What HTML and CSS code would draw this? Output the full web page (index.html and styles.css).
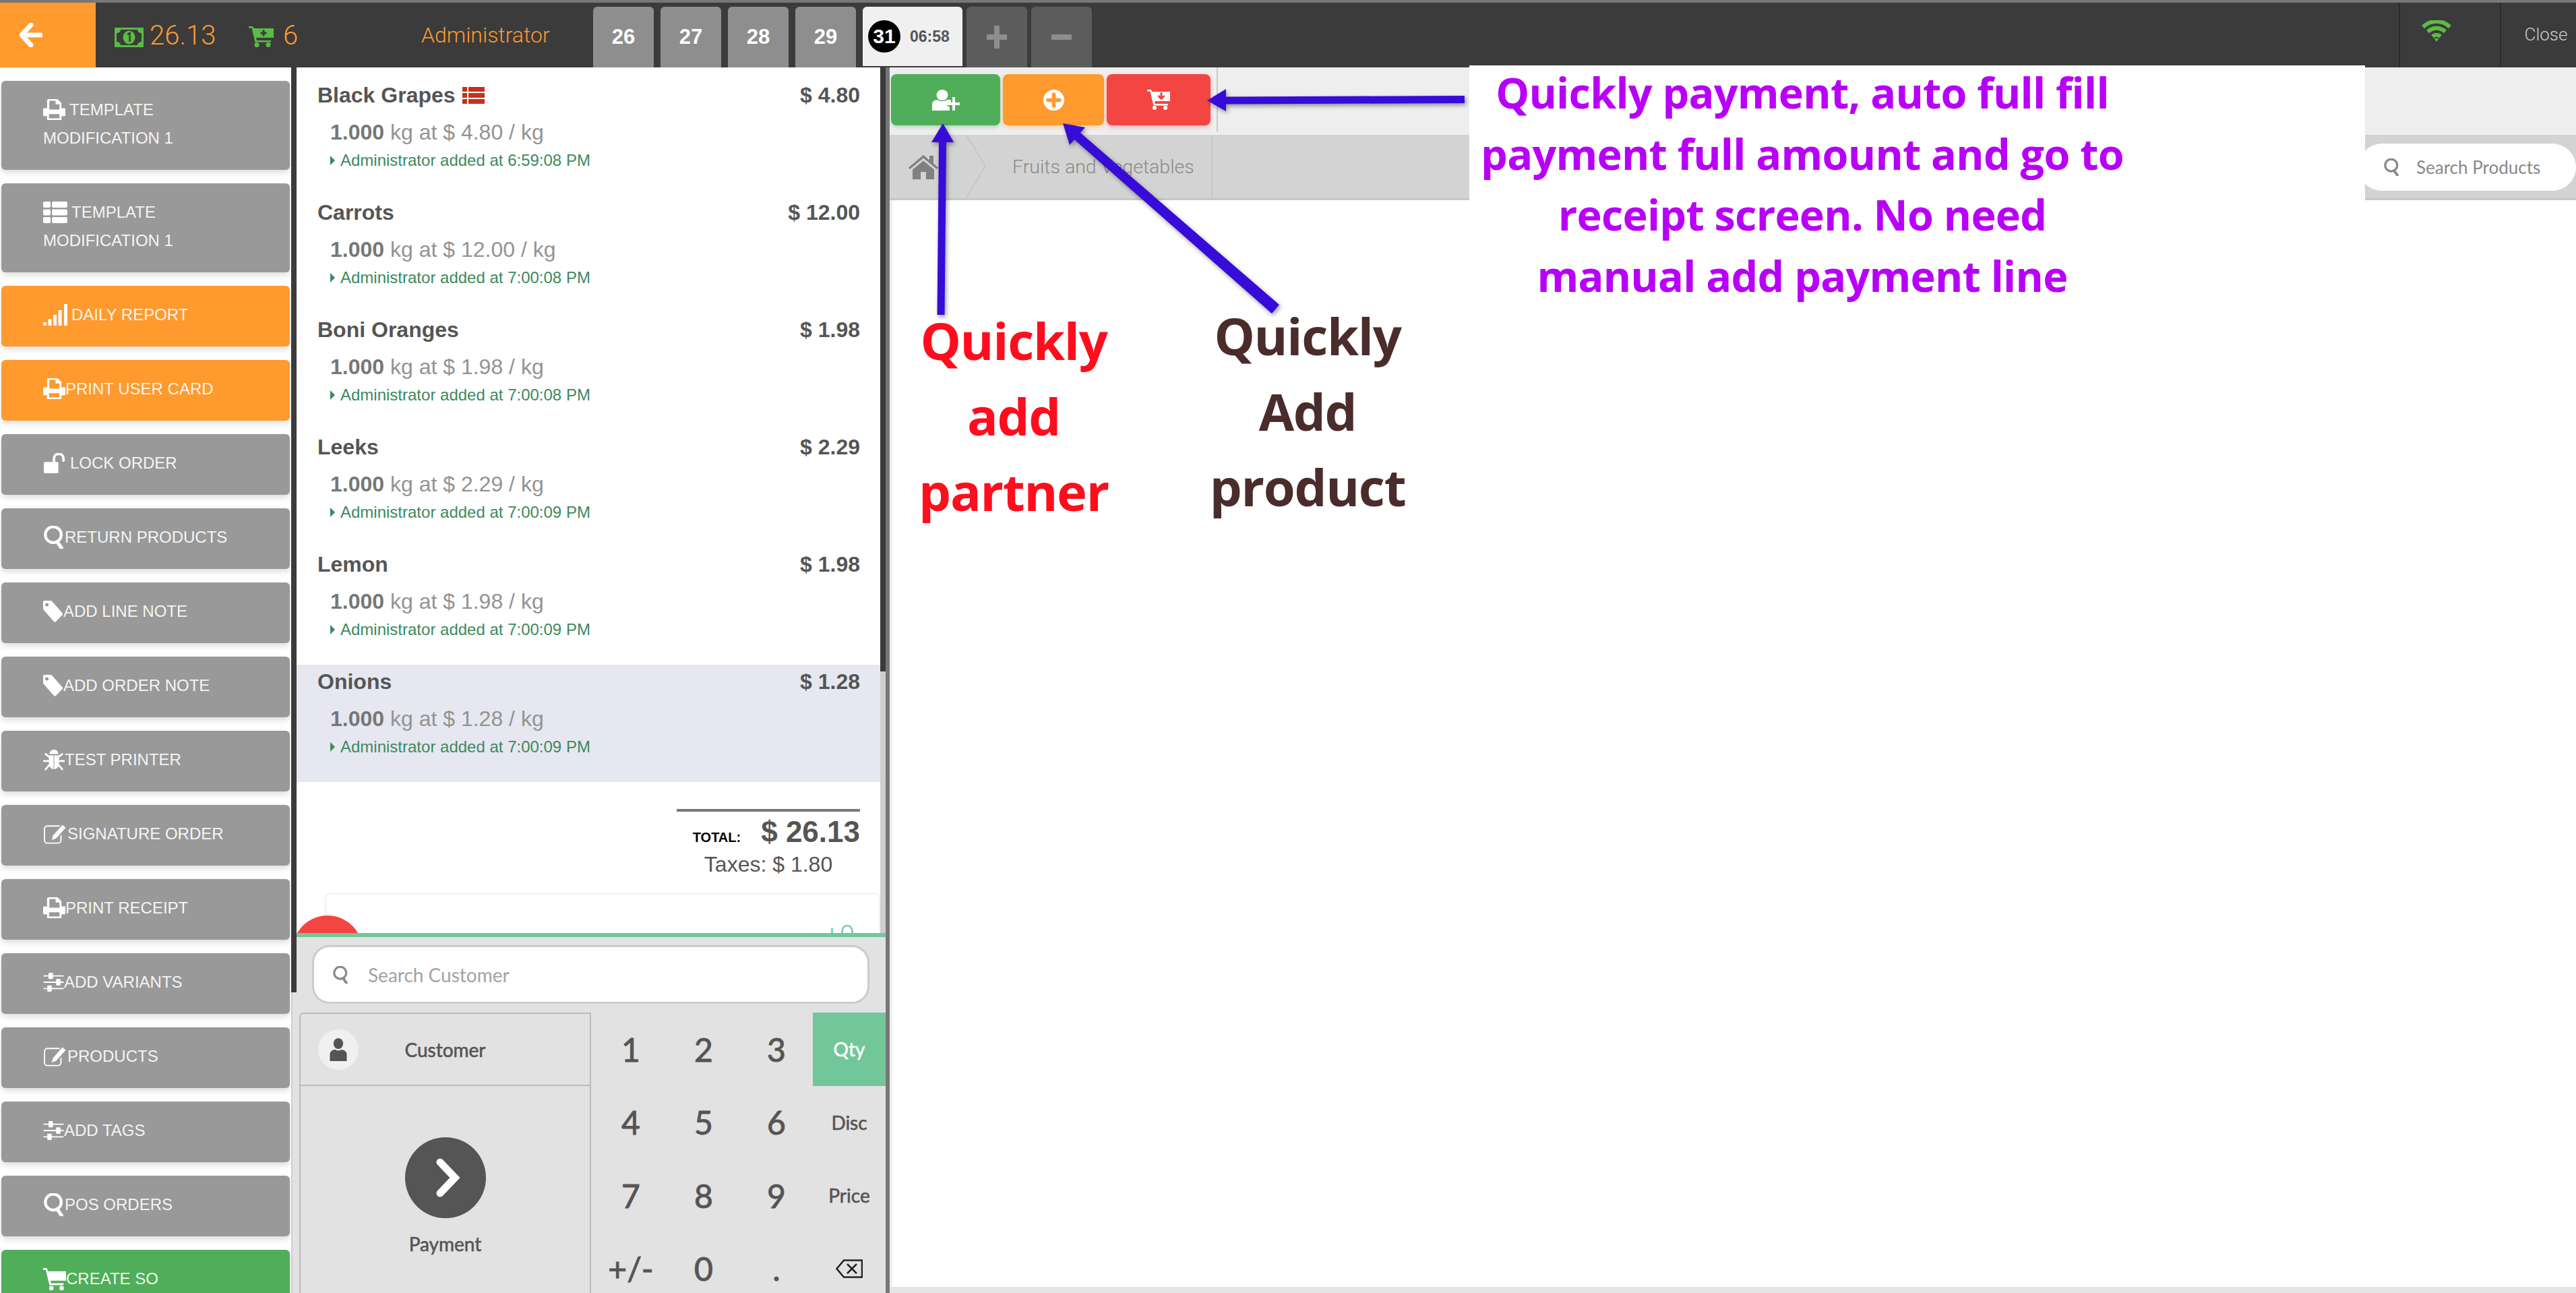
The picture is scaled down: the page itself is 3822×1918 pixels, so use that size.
FILE: index.html
```html
<!DOCTYPE html>
<html lang="en">
<head>
    <meta charset="UTF-8">
    <title>Point of Sale</title>
    <link rel="stylesheet" href="styles.css">
</head>
<body>
<svg class="defs" width="0" height="0">
    <symbol id="i-print" viewBox="0 0 34 34"><path fill-rule="evenodd" d="M8 1h14l6 6v8h5c.6 0 1 .4 1 1v10c0 .6-.4 1-1 1h-5v6H6v-6H1c-.6 0-1-.4-1-1V16c0-.6.4-1 1-1h5V3c0-1 1-2 2-2zm1.500 2.500V17h15.500V9h-6V3.500zM9 24v6.500h16V24z"/></symbol>
    <symbol id="i-list" viewBox="0 0 36 32"><rect x="0" y="0" width="11" height="9" rx="2"/><rect x="13" y="0" width="23" height="9" rx="2"/><rect x="0" y="11.500" width="11" height="9" rx="2"/><rect x="13" y="11.500" width="23" height="9" rx="2"/><rect x="0" y="23" width="11" height="9" rx="2"/><rect x="13" y="23" width="23" height="9" rx="2"/></symbol>
    <symbol id="i-rows" viewBox="0 0 33 25"><rect x="0" y="0" width="7" height="7"/><rect x="9" y="0" width="24" height="7"/><rect x="0" y="9" width="7" height="7"/><rect x="9" y="9" width="24" height="7"/><rect x="0" y="18" width="7" height="7"/><rect x="9" y="18" width="24" height="7"/></symbol>
    <symbol id="i-signal" viewBox="0 0 36 32"><rect x="0" y="27" width="5" height="5"/><rect x="7.500" y="22" width="5" height="10"/><rect x="15" y="16" width="5" height="16"/><rect x="22.500" y="9" width="5" height="23"/><rect x="31" y="0" width="5" height="32"/></symbol>
    <symbol id="i-unlock" viewBox="0 0 34 32"><path d="M2 14h19c1.100 0 2 .9 2 2v14c0 1.100-.9 2-2 2H2c-1.100 0-2-.9-2-2V16c0-1.100.9-2 2-2z"/><path d="M16 14V9c0-4.500 3-7.500 7.500-7.500S31 4.500 31 9v3" fill="none" stroke="#fff" stroke-width="4" stroke-linecap="round"/></symbol>
    <symbol id="i-search" viewBox="0 0 32 36"><circle cx="15" cy="14" r="12.500" fill="none" stroke="currentColor" stroke-width="4.500"/><path d="M21 25l7 10" fill="none" stroke="currentColor" stroke-width="5.500" stroke-linecap="round"/></symbol>
    <symbol id="i-tag" viewBox="0 0 30 32"><path fill-rule="evenodd" d="M2 0h9c1 0 1.700.4 2.400 1.200l15 17c.8.9.8 2.100 0 3L19 31c-.8.9-2.200.9-3 0L1.200 14.200C.5 13.400 0 12.300 0 11.200V2c0-1.100.9-2 2-2zm3.500 3.500a2.500 2.500 0 1 0 0 5 2.500 2.500 0 0 0 0-5z"/></symbol>
    <symbol id="i-bug" viewBox="0 0 32 34"><path d="M9 8c0-4 3-7 7-7s7 3 7 7z"/><path d="M8 10h7.500v22C11 31 8 28 8 23zM16.500 10H24v13c0 5-3 8-7.500 9z"/><path d="M8 12L3 8M24 12l5-4M7 19H0M25 19h7M8 26l-5 6M24 26l5 6" fill="none" stroke="#fff" stroke-width="3" stroke-linecap="round"/></symbol>
    <symbol id="i-edit" viewBox="0 0 36 32"><path d="M27 18v8c0 2.500-2 4.500-4.500 4.500h-17C3 30.500 1 28.500 1 26V8c0-2.500 2-4.500 4.500-4.500H25" fill="none" stroke="#fff" stroke-width="2"/><path d="M29.500 1.500l5 4.500-15 17-7 2.500 2-7z"/></symbol>
    <symbol id="i-sliders" viewBox="0 0 32 30"><path d="M0 4h32v2H0zM0 14h32v2H0zM0 24h32v2H0z"/><rect x="8" y="0" width="7" height="10" rx="1"/><rect x="20" y="10" width="7" height="10" rx="1"/><rect x="6" y="20" width="7" height="10" rx="1"/></symbol>
    <symbol id="i-cart" viewBox="0 0 36 36"><path d="M0 1h6l1.500 5H36v15H11.500l1 4H32v3H10L4 4H0z"/><circle cx="13" cy="32.500" r="3.500"/><circle cx="29" cy="32.500" r="3.500"/></symbol>
    <symbol id="i-home" viewBox="0 0 44 36"><path d="M22 0L31 7.500V1h6v11.500L44 18.500l-2 2.500L22 4.500 2 21l-2-2.500z"/><path d="M22 8.500L38 21.500V36H26V25h-8v11H6V21.500z"/></symbol>
</svg>

<div class="screen">
    <div class="topline"></div>
    <header class="header">
        <a class="back-btn">
            <svg width="34" height="36" viewBox="0 0 34 36"><path d="M17 3L3 18l14 15M4 18h27" fill="none" stroke="#fff" stroke-width="7" stroke-linecap="round" stroke-linejoin="round"/></svg>
        </a>
        <svg class="money" width="43" height="29" viewBox="0 0 43 29"><path fill-rule="evenodd" fill="#5bbb45" d="M1 0h41c.6 0 1 .4 1 1v27c0 .6-.4 1-1 1H1c-.6 0-1-.4-1-1V1c0-.6.4-1 1-1zm8 3c0 3-3 5-6 5v13c3 0 6 2 6 5h25c0-3 3-5 6-5V8c-3 0-6-2-6-5z"/><ellipse cx="21.500" cy="14.500" rx="9" ry="10" fill="#5bbb45"/><path d="M19 10l3.500-2v13" fill="none" stroke="#3b3b3b" stroke-width="2.500"/></svg>
        <span class="hdr-num total-num">26.13</span>
        <svg class="hdr-cart" width="37" height="32" viewBox="0 0 37 32"><path fill="#5bbb45" d="M0 1h6l1.500 3H37v14H11l.8 4H33v2.500H9.500L4.500 3.500H0z"/><circle cx="12" cy="28.500" r="3.500" fill="#5bbb45"/><circle cx="29" cy="28.500" r="3.500" fill="#5bbb45"/><path d="M22 6.500v9M17.500 11h9" stroke="#3b3b3b" stroke-width="3"/></svg>
        <span class="hdr-num cart-num">6</span>
        <span class="cashier">Administrator</span>
        <div class="tabs">
            <div class="tab">26</div>
            <div class="tab">27</div>
            <div class="tab">28</div>
            <div class="tab">29</div>
            <div class="tab tab-active"><span class="tab-circle">31</span><span class="tab-time">06:58</span></div>
            <div class="tab tab-dark">
                <svg width="30" height="34" viewBox="0 0 30 34"><path d="M15 2v30M1 17h28" stroke="#8e8e8e" stroke-width="8" stroke-linecap="round"/></svg>
            </div>
            <div class="tab tab-dark">
                <svg width="30" height="10" viewBox="0 0 30 10"><path d="M2 5h26" stroke="#8e8e8e" stroke-width="8" stroke-linecap="round"/></svg>
            </div>
        </div>
        <div class="hdr-right">
            <div class="hdr-cell wifi-cell">
                <svg width="44" height="32" viewBox="0 0 44 32"><g fill="none" stroke="#5bbb45" stroke-width="6"><path d="M2 10c12-11 28-11 40 0"/><path d="M9 17c8-7 18-7 26 0"/><path d="M16 24c4-3 8-3 12 0"/></g><path d="M18.500 27h7L22 32z" fill="#5bbb45"/></svg>
            </div>
            <div class="hdr-cell close-cell">Close</div>
        </div>
    </header>

    <div class="main">
        <aside class="sidebar">
            <div class="side-btns">
                <a class="side-btn"><svg class="ico gap-print" width="33" height="33"><use href="#i-print"/></svg>TEMPLATE<br>MODIFICATION 1</a>
                <a class="side-btn"><svg class="ico gap-list" width="36" height="32"><use href="#i-list"/></svg>TEMPLATE<br>MODIFICATION 1</a>
                <a class="side-btn btn-orange"><svg class="ico gap-list" width="36" height="32"><use href="#i-signal"/></svg>DAILY REPORT</a>
                <a class="side-btn btn-orange"><svg class="ico" width="33" height="33"><use href="#i-print"/></svg>PRINT USER CARD</a>
                <a class="side-btn"><svg class="ico gap-print" width="34" height="30"><use href="#i-unlock"/></svg>LOCK ORDER</a>
                <a class="side-btn"><svg class="ico" width="32" height="34"><use href="#i-search"/></svg>RETURN PRODUCTS</a>
                <a class="side-btn"><svg class="ico" width="30" height="32"><use href="#i-tag"/></svg>ADD LINE NOTE</a>
                <a class="side-btn"><svg class="ico" width="30" height="32"><use href="#i-tag"/></svg>ADD ORDER NOTE</a>
                <a class="side-btn"><svg class="ico" width="32" height="32"><use href="#i-bug"/></svg>TEST PRINTER</a>
                <a class="side-btn"><svg class="ico" width="36" height="30"><use href="#i-edit"/></svg>SIGNATURE ORDER</a>
                <a class="side-btn"><svg class="ico" width="33" height="33"><use href="#i-print"/></svg>PRINT RECEIPT</a>
                <a class="side-btn"><svg class="ico" width="31" height="28"><use href="#i-sliders"/></svg>ADD VARIANTS</a>
                <a class="side-btn"><svg class="ico" width="36" height="30"><use href="#i-edit"/></svg>PRODUCTS</a>
                <a class="side-btn"><svg class="ico" width="31" height="28"><use href="#i-sliders"/></svg>ADD TAGS</a>
                <a class="side-btn"><svg class="ico" width="32" height="34"><use href="#i-search"/></svg>POS ORDERS</a>
                <a class="side-btn btn-green"><svg class="ico" width="34" height="34"><use href="#i-cart"/></svg>CREATE SO</a>
            </div>
            <div class="side-scroll"><div class="side-thumb"></div></div>
        </aside>

        <section class="order-col">
            <div class="order-top">
                <div class="order-list">
                    <div class="line">
                        <div class="line-head"><span>Black Grapes <svg class="line-flag" width="33" height="25"><use href="#i-rows"/></svg></span><span>$ 4.80</span></div>
                        <div class="line-info"><b>1.000</b> kg at $ 4.80 / kg</div>
                        <div class="line-note">Administrator added at 6:59:08 PM</div>
                    </div>
                    <div class="line">
                        <div class="line-head"><span>Carrots</span><span>$ 12.00</span></div>
                        <div class="line-info"><b>1.000</b> kg at $ 12.00 / kg</div>
                        <div class="line-note">Administrator added at 7:00:08 PM</div>
                    </div>
                    <div class="line">
                        <div class="line-head"><span>Boni Oranges</span><span>$ 1.98</span></div>
                        <div class="line-info"><b>1.000</b> kg at $ 1.98 / kg</div>
                        <div class="line-note">Administrator added at 7:00:08 PM</div>
                    </div>
                    <div class="line">
                        <div class="line-head"><span>Leeks</span><span>$ 2.29</span></div>
                        <div class="line-info"><b>1.000</b> kg at $ 2.29 / kg</div>
                        <div class="line-note">Administrator added at 7:00:09 PM</div>
                    </div>
                    <div class="line">
                        <div class="line-head"><span>Lemon</span><span>$ 1.98</span></div>
                        <div class="line-info"><b>1.000</b> kg at $ 1.98 / kg</div>
                        <div class="line-note">Administrator added at 7:00:09 PM</div>
                    </div>
                    <div class="line line-selected">
                        <div class="line-head"><span>Onions</span><span>$ 1.28</span></div>
                        <div class="line-info"><b>1.000</b> kg at $ 1.28 / kg</div>
                        <div class="line-note">Administrator added at 7:00:09 PM</div>
                    </div>
                    <div class="summary">
                        <div class="summary-total"><span class="summary-label">TOTAL:</span>$ 26.13</div>
                        <div class="summary-tax">Taxes: $ 1.80</div>
                    </div>
                    <div class="loyalty"><span class="loyalty-points">+0</span></div>
                    <div class="red-dot"></div>
                </div>
                <div class="order-scroll"><div class="order-thumb"></div></div>
            </div>
            <div class="pad">
                <div class="cust-search">
                    <svg class="cust-search-ico" width="23" height="26"><use href="#i-search"/></svg>
                    <span>Search Customer</span>
                </div>
                <div class="pad-body">
                    <div class="actions">
                        <div class="act-customer">
                            <span class="avatar">
                                <svg width="28" height="38" viewBox="0 0 28 38"><ellipse cx="14" cy="9" rx="8" ry="9" fill="#555"/><path d="M0 38V27c0-6 6-8 9-8 2 2 8 2 10 0 3 0 9 2 9 8v11z" fill="#555"/></svg>
                            </span>
                            <span class="act-customer-name">Customer</span>
                        </div>
                        <div class="act-pay">
                            <span class="pay-circle">
                                <svg width="40" height="62" viewBox="0 0 40 62"><path d="M9 8l22 23L9 54" fill="none" stroke="#fff" stroke-width="11" stroke-linecap="round"/></svg>
                            </span>
                            <span class="pay-label">Payment</span>
                        </div>
                    </div>
                    <div class="numpad">
                        <div class="key">1</div><div class="key">2</div><div class="key">3</div><div class="key key-mode key-on">Qty</div>
                        <div class="key">4</div><div class="key">5</div><div class="key">6</div><div class="key key-mode">Disc</div>
                        <div class="key">7</div><div class="key">8</div><div class="key">9</div><div class="key key-mode">Price</div>
                        <div class="key">+/-</div><div class="key">0</div><div class="key">.</div>
                        <div class="key">
                            <svg width="40" height="28" viewBox="0 0 40 28"><path d="M39 1.500H12L1.500 14 12 26.500h27z" fill="none" stroke="#222" stroke-width="2.500"/><path d="M17 7l14 14M31 7L17 21" stroke="#222" stroke-width="2.500"/></svg>
                        </div>
                    </div>
                </div>
            </div>
        </section>

        <section class="products">
            <div class="toolbar">
                <a class="quick quick-green">
                    <svg width="41" height="31" viewBox="0 0 41 31"><ellipse cx="15" cy="8" rx="8.500" ry="8" fill="#fff"/><path d="M0 31V22c0-4 3-7 8-7 4 3 10 3 14 0h6v4h-5v6h3v6z" fill="#fff"/><path d="M32 11v20M23 21h18" stroke="#fff" stroke-width="4"/></svg>
                </a>
                <a class="quick quick-orange">
                    <svg width="31" height="31" viewBox="0 0 31 31"><circle cx="15.500" cy="15.500" r="15.500" fill="#fff"/><path d="M15.500 7v17M7 15.500h17" stroke="#ff9a2e" stroke-width="5.500" stroke-linecap="round"/></svg>
                </a>
                <a class="quick quick-red">
                    <svg width="34" height="30" viewBox="0 0 34 30"><path fill="#fff" d="M0 0h6l1.500 3H34v14H11l.8 4H31v2.500H9.500L4.500 2.500H0z"/><circle cx="11" cy="27" r="3" fill="#fff"/><circle cx="27" cy="27" r="3" fill="#fff"/><path d="M21 4v8M16.500 9l4.500 4.500L25.500 9" fill="none" stroke="#f34541" stroke-width="3"/></svg>
                </a>
                <span class="toolbar-line"></span>
            </div>
            <div class="crumbs">
                <svg class="crumb-home" width="44" height="36"><use href="#i-home"/></svg>
                <svg class="crumb-sep" width="30" height="97" viewBox="0 0 30 97"><path d="M0 0l29 47L0 96" fill="none" stroke="#c4c4c4" stroke-width="1.500"/></svg>
                <span class="crumb-text">Fruits and Vegetables</span>
                <div class="prod-search">
                    <svg class="prod-search-ico" width="23" height="26"><use href="#i-search"/></svg>
                    <span>Search Products</span>
                </div>
            </div>
            <div class="prod-area"></div>
            <div class="prod-foot"></div>
        </section>
    </div>

    <!-- notes drawn over the screenshot -->
    <div class="note-box"></div>
    <svg class="arrows" width="3822" height="1918" viewBox="0 0 3822 1918">
        <path d="M2173 142L1819 143.500V132L1791 149l28 16v-10.500L2173 153z"/>
        <path d="M1390.500 467L1393 211H1382L1399 183l16 28H1404L1401.500 467z"/>
        <path d="M1898 452L1603 197 1610 189 1577 183 1587 215 1594 207 1887 465z"/>
    </svg>
    <div class="note note-pay">Quickly payment, auto full fill<br>payment full amount and go to<br>receipt screen. No need<br>manual add payment line</div>
    <div class="note note-partner">Quickly<br>add<br>partner</div>
    <div class="note note-product">Quickly<br>Add<br>product</div>
</div>
</body>
</html>
```

FILE: styles.css
```css
* {
    box-sizing: border-box;
}
html, body {
    margin: 0;
    padding: 0;
    background: #fff;
}
.defs {
    position: absolute;
}
.screen {
    position: relative;
    width: 3822px;
    height: 1918px;
    overflow: hidden;
    display: flex;
    flex-direction: column;
    font-family: "Liberation Sans", Arial, sans-serif;
}
.topline {
    height: 4px;
    background: #777;
    flex: none;
}

/* header */
.header {
    height: 96px;
    flex: none;
    background: #3b3b3b;
    display: flex;
    align-items: center;
    font-family: Roboto, "Liberation Sans", sans-serif;
    font-weight: 300;
    color: #ff9a2e;
}
.back-btn {
    width: 142px;
    height: 96px;
    background: #ff9a2e;
    display: flex;
    align-items: center;
    padding-left: 29px;
}
.money {
    margin-left: 28px;
    margin-top: 6px;
}
.hdr-num {
    font-size: 40px;
}
.total-num {
    margin-left: 9px;
    width: 100px;
}
.hdr-cart {
    margin-left: 47px;
    margin-top: 4px;
}
.cart-num {
    margin-left: 14px;
    width: 24px;
}
.cashier {
    margin-left: 181px;
    font-size: 32px;
    width: 255px;
}
.tabs {
    display: flex;
    align-self: flex-start;
    margin-top: 6px;
    gap: 10px;
}
.tab {
    width: 90px;
    height: 90px;
    background: #8e8e8e;
    border-radius: 6px 6px 0 0;
    color: #fff;
    font-family: "Liberation Sans", sans-serif;
    font-weight: 700;
    font-size: 31px;
    display: flex;
    align-items: center;
    justify-content: center;
}
.tab-active {
    width: 148px;
    height: 88px;
    background: #f0f0f0;
    justify-content: flex-start;
    padding-left: 8px;
}
.tab-circle {
    width: 48px;
    height: 48px;
    border-radius: 50%;
    background: #000;
    color: #fff;
    font-size: 30px;
    display: flex;
    align-items: center;
    justify-content: center;
}
.tab-time {
    margin-left: 14px;
    font-size: 23px;
    color: #555;
}
.tab-dark {
    background: #5c5c5c;
    margin-left: -4px;
}
.hdr-right {
    margin-left: auto;
    display: flex;
    height: 96px;
}
.hdr-cell {
    display: flex;
    align-items: center;
    justify-content: center;
    border-left: 2px solid #2b2b2b;
}
.wifi-cell {
    width: 150px;
    padding-right: 40px;
    padding-bottom: 12px;
}
.close-cell {
    width: 113px;
    color: #ccc;
    font-size: 26px;
    padding-left: 22px;
    padding-bottom: 2px;
}

/* main */
.main {
    flex: 1;
    display: flex;
    min-height: 0;
}

/* left buttons */
.sidebar {
    width: 440px;
    flex: none;
    display: flex;
    overflow: hidden;
}
.side-btns {
    width: 432px;
    flex: none;
    padding: 20px 2px 0;
    display: flex;
    flex-direction: column;
    gap: 20px;
}
.side-btn {
    display: block;
    flex: none;
    width: 428px;
    padding: 22px 10px 26px 62px;
    background: #999;
    border-radius: 6px;
    box-shadow: 0 4px 10px rgba(0, 0, 0, 0.14);
    color: rgba(255, 255, 255, 0.92);
    fill: #fff;
    font-family: "Liberation Sans", sans-serif;
    font-size: 24px;
    line-height: 42px;
    white-space: nowrap;
}
.btn-orange {
    background: #ff9a2e;
}
.btn-green {
    background: #50ae5a;
}
.ico {
    vertical-align: middle;
    margin-top: -4px;
    color: #fff;
}
.gap-print {
    margin-right: 6px;
}
.gap-list {
    margin-right: 6px;
}
.side-scroll {
    width: 8px;
    background: #e2e2e2;
    border-left: 2px solid #cfcfcf;
}
.side-thumb {
    width: 8px;
    height: 1372px;
    margin-left: -2px;
    background: #3b3b3b;
}

/* order */
.order-col {
    width: 880px;
    flex: none;
    display: flex;
    flex-direction: column;
    border-right: 6px solid #777;
}
.order-top {
    height: 1290px;
    flex: none;
    display: flex;
    border-bottom: 6px solid #72c79a;
}
.order-list {
    position: relative;
    width: 866px;
    flex: none;
    overflow: hidden;
    padding-top: 16px;
    background: #fff;
}
.order-scroll {
    width: 8px;
    flex: none;
    background: #cfcfcf;
}
.order-thumb {
    height: 896px;
    background: #3b3b3b;
}
.line {
    height: 174px;
    padding: 0 30px 0 31px;
}
.line-selected {
    background: #e6e7f0;
}
.line-head {
    display: flex;
    justify-content: space-between;
    height: 50px;
    line-height: 50px;
    font-size: 32px;
    font-weight: 700;
    color: #555;
}
.line-flag {
    fill: #c9301a;
    vertical-align: -2px;
    margin-left: 2px;
}
.line-info {
    margin: 10px 0 0 19px;
    line-height: 40px;
    font-size: 32px;
    color: #939393;
}
.line-info b {
    color: #777;
}
.line-note {
    position: relative;
    margin: 7px 0 0 34px;
    line-height: 30px;
    font-size: 24px;
    color: #3b8a5e;
}
.line-note::before {
    content: "";
    position: absolute;
    left: -15px;
    top: 8px;
    border-left: 7px solid #3b8a5e;
    border-top: 7px solid transparent;
    border-bottom: 7px solid transparent;
}
.summary {
    width: 272px;
    margin: 40px 30px 0 auto;
    border-top: 4px solid #777;
    text-align: center;
}
.summary-total {
    line-height: 60px;
    font-size: 44px;
    font-weight: 700;
    color: #555;
    text-align: right;
}
.summary-label {
    margin-right: 30px;
    font-size: 20px;
    color: #000;
}
.summary-tax {
    margin-top: -10px;
    line-height: 40px;
    font-size: 32px;
    color: #555;
}
.loyalty {
    margin: 23px 0 0 42px;
    height: 120px;
    border: 2px solid #f3f3f3;
    border-radius: 8px 8px 0 0;
    box-shadow: 0 0 6px rgba(0, 0, 0, 0.03);
    position: relative;
    text-align: right;
    padding: 38px 36px 0 0;
}
.loyalty-points {
    font-size: 40px;
    line-height: 46px;
    color: #72c79a;
    font-family: Roboto, sans-serif;
    font-weight: 300;
}
.red-dot {
    position: absolute;
    left: -6px;
    top: 1258px;
    width: 104px;
    height: 104px;
    border-radius: 50%;
    background: #f34541;
}

/* numpad */
.pad {
    flex: 1;
    background: #e2e2e2;
    padding-top: 12px;
    font-family: Lato, sans-serif;
    min-height: 0;
    overflow: hidden;
}
.cust-search {
    width: 827px;
    height: 87px;
    margin-left: 23px;
    background: #fff;
    border: 3px solid #ccc;
    border-radius: 26px;
    display: flex;
    align-items: center;
    color: #a3a3a3;
    font-size: 28px;
    padding-left: 28px;
}
.cust-search-ico, .prod-search-ico {
    color: #8a8a8a;
    margin-right: 29px;
}
.pad-body {
    display: flex;
    margin-top: 13px;
}
.actions {
    width: 433px;
    margin: 0 5px 0 4px;
    flex: none;
}
.act-customer {
    height: 109px;
    display: flex;
    align-items: center;
    border: 2px solid #bcbcbc;
    border-radius: 6px 0 0 0;
    padding-left: 26px;
}
.avatar {
    width: 60px;
    height: 60px;
    border-radius: 50%;
    background: #f0f0f0;
    display: flex;
    align-items: center;
    justify-content: center;
}
.avatar svg {
    width: 26px;
    height: 34px;
}
.act-customer-name {
    flex: 1;
    text-align: center;
    padding-right: 86px;
    font-size: 28px;
    color: #555;
    -webkit-text-stroke: 0.6px #555;
}
.act-pay {
    height: 310px;
    border: 2px solid #bcbcbc;
    border-top: none;
    border-bottom: none;
    display: flex;
    flex-direction: column;
    align-items: center;
    padding-top: 76px;
}
.pay-circle {
    width: 120px;
    height: 120px;
    border-radius: 50%;
    background: #555;
    display: flex;
    align-items: center;
    justify-content: center;
    padding-left: 6px;
}
.pay-label {
    margin-top: 22px;
    line-height: 32px;
    font-size: 28px;
    color: #555;
    -webkit-text-stroke: 0.6px #555;
}
.numpad {
    display: grid;
    grid-template-columns: repeat(4, 108px);
    grid-auto-rows: 108.5px;
    flex: none;
}
.key {
    display: flex;
    align-items: center;
    justify-content: center;
    font-size: 48px;
    color: #555;
    -webkit-text-stroke: 1px #555;
}
.key-mode {
    font-size: 28px;
    -webkit-text-stroke: 0.6px #555;
}
.key-on {
    background: #72c79a;
    color: #fff;
    -webkit-text-stroke: 0.6px #fff;
}

/* products */
.products {
    flex: 1;
    min-width: 0;
    display: flex;
    flex-direction: column;
}
.toolbar {
    height: 100px;
    flex: none;
    background: #efeeef;
    display: flex;
    align-items: flex-start;
    padding: 10px 0 0 2px;
    gap: 4px;
}
.quick {
    height: 76px;
    border-radius: 8px;
    display: flex;
    align-items: center;
    justify-content: center;
}
.quick-green {
    width: 162px;
    background: #50ae5a;
    box-shadow: 0 3px 6px rgba(80, 174, 90, 0.35);
}
.quick-orange {
    width: 150px;
    background: #ff9a2e;
    box-shadow: 0 3px 6px rgba(255, 154, 46, 0.35);
}
.quick-red {
    width: 154px;
    background: #f34541;
    box-shadow: 0 3px 6px rgba(243, 69, 65, 0.35);
}
.toolbar-line {
    width: 2px;
    height: 96px;
    margin: -10px 0 0 5px;
    background: #ccc;
}
.crumbs {
    height: 97px;
    flex: none;
    background: #d3d3d3;
    border-bottom: 3px solid #c6c6c6;
    display: flex;
    align-items: center;
    overflow: hidden;
}
.crumb-home {
    margin: 2px 0 0 28px;
    fill: #808080;
}
.crumb-sep {
    margin-left: 41px;
    flex: none;
}
.crumb-text {
    width: 336px;
    height: 97px;
    padding: 0 0 0 39px;
    line-height: 98px;
    border-right: 2px solid #c6c6c6;
    color: #8a8a8a;
    font-family: Roboto, "Liberation Sans", sans-serif;
    font-weight: 300;
    font-size: 28.5px;
}
.prod-search {
    margin-left: auto;
    margin-top: 2px;
    width: 323px;
    height: 70px;
    border-radius: 35px;
    background: #fff;
    display: flex;
    align-items: center;
    padding-left: 38px;
    font-family: Lato, sans-serif;
    font-size: 26px;
    color: #888;
}
.prod-search-ico {
    margin-right: 25px;
}
.prod-area {
    flex: 1;
    background: #fff;
    border-left: 4px solid #eee;
}
.prod-foot {
    height: 9px;
    flex: none;
    background: #e6e3e5;
}

/* notes */
.note-box {
    position: absolute;
    left: 2180px;
    top: 97px;
    width: 1329px;
    height: 200px;
    background: #fff;
}
.arrows {
    position: absolute;
    left: 0;
    top: 0;
    fill: #370bd8;
    filter: drop-shadow(2px 3px 3px rgba(0, 0, 0, 0.4));
}
.note {
    position: absolute;
    text-align: center;
    font-family: "Open Sans", sans-serif;
    font-weight: 700;
    white-space: nowrap;
}
.note-pay {
    left: 2180px;
    top: 92px;
    width: 988px;
    font-size: 63px;
    letter-spacing: -0.8px;
    line-height: 90.5px;
    color: #b800f8;
}
.note-partner {
    left: 1304px;
    top: 449px;
    width: 400px;
    font-size: 76px;
    letter-spacing: -1.3px;
    line-height: 112px;
    color: #ff0d1d;
}
.note-product {
    left: 1740px;
    top: 442px;
    width: 400px;
    font-size: 76px;
    letter-spacing: -1.3px;
    line-height: 112px;
    color: #4a2c2c;
}
```
